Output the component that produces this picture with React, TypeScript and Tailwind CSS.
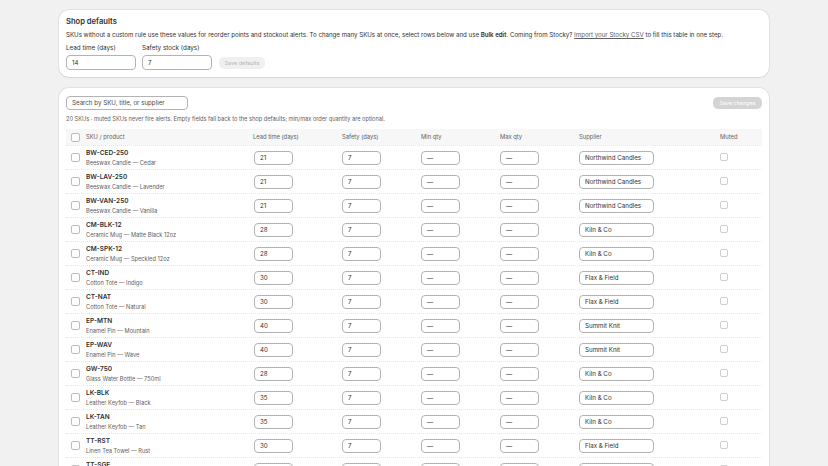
const rows = [
  { sku: "BW-CED-250", name: "Beeswax Candle — Cedar", lead: "21", supplier: "Northwind Candles" },
  { sku: "BW-LAV-250", name: "Beeswax Candle — Lavender", lead: "21", supplier: "Northwind Candles" },
  { sku: "BW-VAN-250", name: "Beeswax Candle — Vanilla", lead: "21", supplier: "Northwind Candles" },
  { sku: "CM-BLK-12", name: "Ceramic Mug — Matte Black 12oz", lead: "28", supplier: "Kiln & Co" },
  { sku: "CM-SPK-12", name: "Ceramic Mug — Speckled 12oz", lead: "28", supplier: "Kiln & Co" },
  { sku: "CT-IND", name: "Cotton Tote — Indigo", lead: "30", supplier: "Flax & Field" },
  { sku: "CT-NAT", name: "Cotton Tote — Natural", lead: "30", supplier: "Flax & Field" },
  { sku: "EP-MTN", name: "Enamel Pin — Mountain", lead: "40", supplier: "Summit Knit" },
  { sku: "EP-WAV", name: "Enamel Pin — Wave", lead: "40", supplier: "Summit Knit" },
  { sku: "GW-750", name: "Glass Water Bottle — 750ml", lead: "28", supplier: "Kiln & Co" },
  { sku: "LK-BLK", name: "Leather Keyfob — Black", lead: "35", supplier: "Kiln & Co" },
  { sku: "LK-TAN", name: "Leather Keyfob — Tan", lead: "35", supplier: "Kiln & Co" },
  { sku: "TT-RST", name: "Linen Tea Towel — Rust", lead: "30", supplier: "Flax & Field" },
  { sku: "TT-SGE", name: "Linen Tea Towel — Sage", lead: "30", supplier: "Flax & Field" },
  { sku: "WB-OAK", name: "Wooden Bowl — Oak", lead: "45", supplier: "Summit Knit" },
];

const grid = "grid grid-cols-[20px_167px_89px_79px_79px_79px_141px_42px] items-center";

function Box({ muted }: { muted?: boolean }) {
  return (
    <span
      className={`block rounded-[2px] border bg-white ${
        muted ? "h-[8px] w-[8px] border-[#cfcfcf]" : "h-[9px] w-[9px] border-[#bdbdbd]"
      }`}
    />
  );
}

function Field({ value, w }: { value: string; w: string }) {
  return (
    <div className={`${w} flex h-[14px] items-center rounded-[4px] border border-[#b3b3b3] bg-white pl-[5px] text-[6.2px] text-[#303030]`}>
      {value}
    </div>
  );
}

export default function App() {
  return (
    <div className="min-h-screen bg-[#f1f1f1] pt-[10px] font-['Inter',sans-serif] text-[#303030]">
      <div className="mx-auto w-[710px]">
        <section className="rounded-[10px] bg-white px-[7px] pb-[7px] pt-[7px] shadow-[0_0_0_1px_rgba(0,0,0,0.06),0_1px_1px_rgba(0,0,0,0.06)]">
          <h2 className="h-[10px] text-[7.6px] font-semibold leading-[10px]">Shop defaults</h2>
          <p className="mt-[3px] h-[10px] whitespace-nowrap text-[6.15px] leading-[10px] text-[#303030]">
            SKUs without a custom rule use these values for reorder points and stockout alerts. To change many SKUs at
            once, select rows below and use <b className="font-semibold">Bulk edit</b>. Coming from Stocky?{" "}
            <span className="text-[#616161] underline">Import your Stocky CSV</span> to fill this table in one step.
          </p>
          <div className="mt-[3px] flex items-end gap-[6px]">
            <label className="flex flex-col gap-[2px]">
              <span className="h-[10px] text-[6.3px] leading-[10px]">Lead time (days)</span>
              <Field value="14" w="w-[70px] h-[15px]" />
            </label>
            <label className="flex flex-col gap-[2px]">
              <span className="h-[10px] text-[6.3px] leading-[10px]">Safety stock (days)</span>
              <Field value="7" w="w-[70px] h-[15px]" />
            </label>
            <button className="mb-[1px] ml-[1px] h-[12px] w-[46px] rounded-[5px] bg-[#f0f0f0] text-[5.4px] text-[#b5b5b5]">
              Save defaults
            </button>
          </div>
        </section>

        <section className="mt-[11px] rounded-[10px] bg-white px-[7px] pt-[8px] shadow-[0_0_0_1px_rgba(0,0,0,0.06),0_1px_1px_rgba(0,0,0,0.06)]">
          <div className="flex items-center justify-between">
            <div className="flex h-[14px] w-[122px] items-center rounded-[4px] border border-[#b3b3b3] pl-[5px] text-[6.2px] text-[#4a4a4a]">
              Search by SKU, title, or supplier
            </div>
            <button className="h-[12px] w-[49px] rounded-[5px] bg-[#d4d4d4] text-[5.4px] text-white">Save changes</button>
          </div>
          <p className="mt-[4px] h-[10px] whitespace-nowrap text-[5.65px] leading-[10px] text-[#616161]">
            20 SKUs · muted SKUs never fire alerts. Empty fields fall back to the shop defaults; min/max order quantity
            are optional.
          </p>
          <div className="mt-[5px]">
            <div className={`${grid} h-[16px] bg-[#f7f7f7] text-[5.8px] text-[#616161]`}>
              <div className="pl-[5px]">
                <Box />
              </div>
              <div>SKU / product</div>
              <div>Lead time (days)</div>
              <div>Safety (days)</div>
              <div>Min qty</div>
              <div>Max qty</div>
              <div>Supplier</div>
              <div>Muted</div>
            </div>
            {rows.map((r) => (
              <div key={r.sku} className={`${grid} h-[24px] border-t border-dotted border-[#e6e6e6]`}>
                <div className="pl-[5px]">
                  <Box />
                </div>
                <div className="flex flex-col leading-[9px]">
                  <span className="text-[6.5px] font-semibold text-[#303030]">{r.sku}</span>
                  <span className="text-[5.7px] text-[#616161]">{r.name}</span>
                </div>
                <div className="pl-[1px]">
                  <Field value={r.lead} w="w-[39px]" />
                </div>
                <div>
                  <Field value="7" w="w-[39px]" />
                </div>
                <div>
                  <Field value="—" w="w-[39px]" />
                </div>
                <div>
                  <Field value="—" w="w-[39px]" />
                </div>
                <div>
                  <Field value={r.supplier} w="w-[75px]" />
                </div>
                <div className="pb-[2px]">
                  <Box muted />
                </div>
              </div>
            ))}
          </div>
        </section>
      </div>
    </div>
  );
}
